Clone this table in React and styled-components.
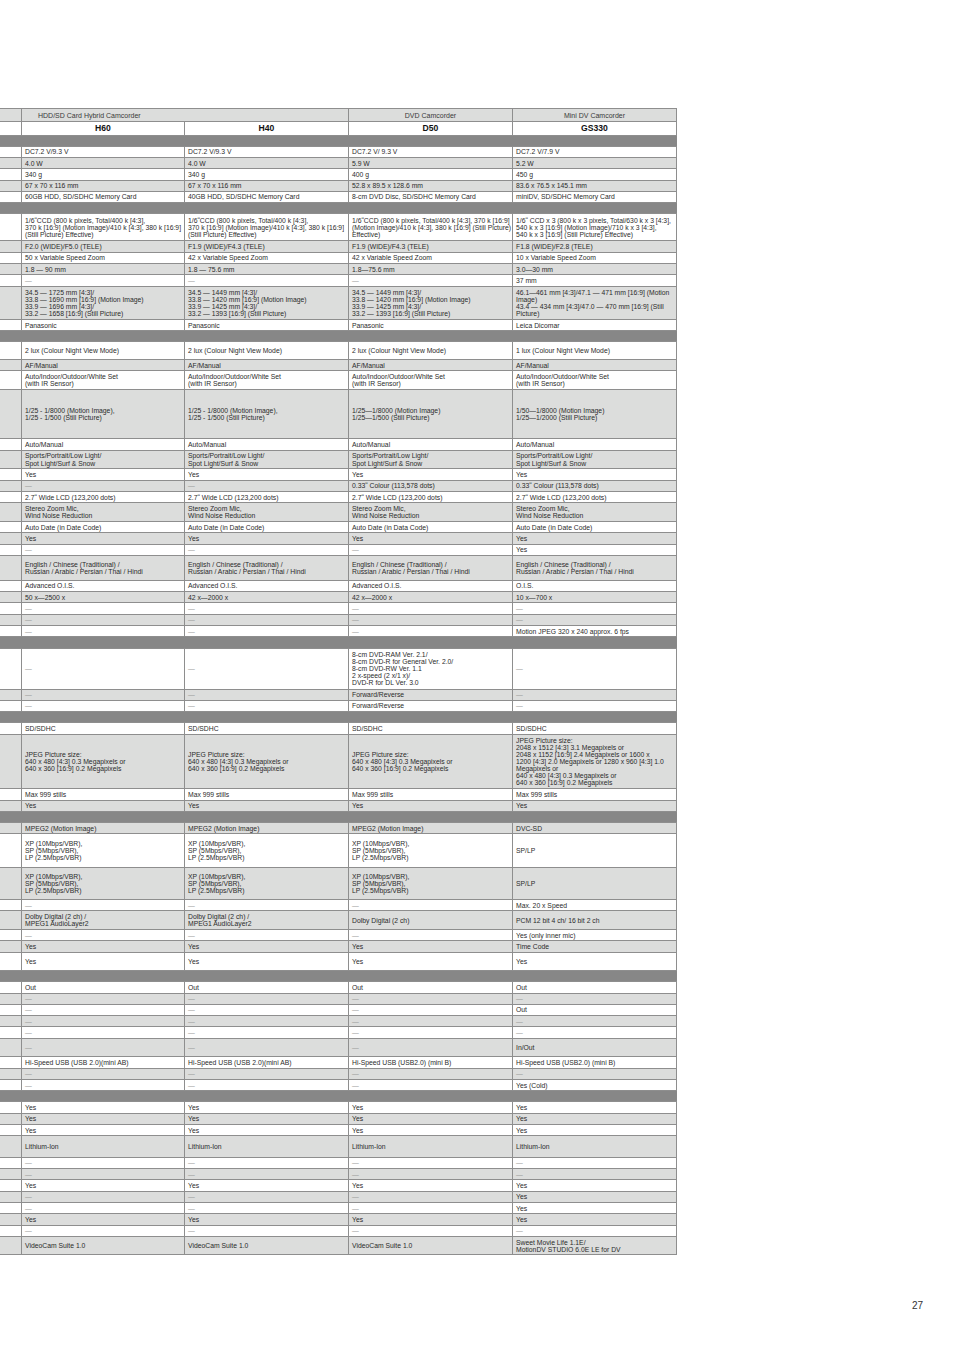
import React from "react";
import styled, { createGlobalStyle } from "styled-components";

const Global = createGlobalStyle`
  html, body { margin: 0; padding: 0; background: #fff; }
  body { font-family: "Liberation Sans", Arial, sans-serif; }
`;

const LINE = "#8e8e8e";
const GREY = "#dcdddc";

const Page = styled.div`
  width: 954px;
  min-height: 1350px;
  box-sizing: border-box;
  padding-top: 108px;
  display: flex;
  flex-direction: column;
`;

const Table = styled.div`
  width: 677px;
  border-top: 1px solid ${LINE};
  display: flex;
  flex-direction: column;
`;

const Row = styled.div`
  display: grid;
  grid-template-columns: 22px 163px 164px 164px 164px;
  height: ${(p) => p.$h}px;
  box-sizing: border-box;
  background: ${(p) => (p.$grey ? GREY : "#fff")};
  border-bottom: 1px solid ${LINE};
`;

const LabelCell = styled.div`
  border-right: 1px solid ${LINE};
  box-sizing: border-box;
`;

const Cell = styled.div`
  display: flex;
  align-items: center;
  box-sizing: border-box;
  padding: 0 2px 0 3px;
  border-right: 1px solid ${LINE};
  white-space: nowrap;
  font-size: 6.8px;
  line-height: 7.1px;
  color: #2b2b2b;
`;

const Dash = styled.span`
  color: #9a9a9a;
`;

const CategoryCell = styled.div`
  grid-column: span ${(p) => p.$span || 1};
  display: flex;
  align-items: center;
  justify-content: ${(p) => (p.$left ? "flex-start" : "center")};
  padding-left: ${(p) => (p.$left ? "16px" : "0")};
  border-right: 1px solid ${LINE};
  box-sizing: border-box;
  font-size: 7px;
  color: #3a3a3a;
  white-space: nowrap;
`;

const ModelCell = styled.div`
  display: flex;
  align-items: center;
  justify-content: center;
  border-right: 1px solid ${LINE};
  box-sizing: border-box;
  font-size: 8.6px;
  font-weight: 700;
  color: #111;
`;

const SectionBar = styled.div`
  height: ${(p) => p.$h}px;
  background: #878787;
  border-bottom: 1px solid ${LINE};
  box-sizing: border-box;
`;

const Footer = styled.div`
  display: flex;
  justify-content: flex-end;
  padding-right: 31px;
  margin-top: 45px;
`;

const PageNum = styled.span`
  font-size: 10px;
  color: #333;
`;

const S = 11.3;
const r = (c, h = S) => ({ h, c: Array.isArray(c) ? c : [c, c, c, c] });
const D = "-";

const sections = [
  {
    grey: false,
    rows: [
      r(["DC7.2 V/9.3 V", "DC7.2 V/9.3 V", "DC7.2 V/ 9.3 V", "DC7.2 V/7.9 V"]),
      r(["4.0 W", "4.0 W", "5.9 W", "5.2 W"]),
      r(["340 g", "340 g", "400 g", "450 g"]),
      r(["67 x 70 x 116 mm", "67 x 70 x 116 mm", "52.8 x 89.5 x 128.6 mm", "83.6 x 76.5 x 145.1 mm"]),
      r(["60GB HDD, SD/SDHC Memory Card", "40GB HDD, SD/SDHC Memory Card", "8-cm DVD Disc, SD/SDHC Memory Card", "miniDV, SD/SDHC Memory Card"]),
    ],
  },
  {
    grey: false,
    rows: [
      r(
        [
          "1/6\u02BACCD (800 k pixels, Total/400 k [4:3],\n370 k [16:9] (Motion Image)/410 k [4:3], 380 k [16:9]\n(Still Picture) Effective)",
          "1/6\u02BACCD (800 k pixels, Total/400 k [4:3],\n370 k [16:9] (Motion Image)/410 k [4:3], 380 k [16:9]\n(Still Picture) Effective)",
          "1/6\u02BACCD (800 k pixels, Total/400 k [4:3], 370 k [16:9]\n(Motion Image)/410 k [4:3], 380 k [16:9] (Still Picture)\nEffective)",
          "1/6\u02BA CCD x 3 (800 k x 3 pixels, Total/630 k x 3 [4:3],\n540 k x 3 [16:9] (Motion Image)/710 k x 3 [4:3],\n540 k x 3 [16:9] (Still Picture) Effective)",
        ],
        27
      ),
      r(["F2.0 (WIDE)/F5.0 (TELE)", "F1.9 (WIDE)/F4.3 (TELE)", "F1.9 (WIDE)/F4.3 (TELE)", "F1.8 (WIDE)/F2.8 (TELE)"]),
      r(["50 x Variable Speed Zoom", "42 x Variable Speed Zoom", "42 x Variable Speed Zoom", "10 x Variable Speed Zoom"]),
      r(["1.8 \u2014 90 mm", "1.8 \u2014 75.6 mm", "1.8\u201475.6 mm", "3.0\u201430 mm"]),
      r([D, D, D, "37 mm"]),
      r(
        [
          "34.5 \u2014 1725 mm [4:3]/\n33.8 \u2014 1690 mm [16:9] (Motion Image)\n33.9 \u2014 1696 mm [4:3]/\n33.2 \u2014 1658 [16:9] (Still Picture)",
          "34.5 \u2014 1449 mm [4:3]/\n33.8 \u2014 1420 mm [16:9] (Motion Image)\n33.9 \u2014 1425 mm [4:3]/\n33.2 \u2014 1393 [16:9] (Still Picture)",
          "34.5 \u2014 1449 mm [4:3]/\n33.8 \u2014 1420 mm [16:9] (Motion Image)\n33.9 \u2014 1425 mm [4:3]/\n33.2 \u2014 1393 [16:9] (Still Picture)",
          "46.1\u2014461 mm [4:3]/47.1 \u2014 471 mm [16:9] (Motion\nImage)\n43.4 \u2014 434 mm [4:3]/47.0 \u2014 470 mm [16:9] (Still\nPicture)",
        ],
        33.4
      ),
      r(["Panasonic", "Panasonic", "Panasonic", "Leica Dicomar"]),
    ],
  },
  {
    grey: false,
    rows: [
      r(["2 lux (Colour Night View Mode)", "2 lux (Colour Night View Mode)", "2 lux (Colour Night View Mode)", "1 lux (Colour Night View Mode)"], 17.5),
      r("AF/Manual"),
      r("Auto/Indoor/Outdoor/White Set\n(with IR Sensor)", 18.7),
      r(
        [
          "1/25 - 1/8000 (Motion Image),\n1/25 - 1/500 (Still Picture)",
          "1/25 - 1/8000 (Motion Image),\n1/25 - 1/500 (Still Picture)",
          "1/25\u20141/8000 (Motion Image)\n1/25\u20141/500 (Still Picture)",
          "1/50\u20141/8000 (Motion Image)\n1/25\u20141/2000 (Still Picture)",
        ],
        49.5
      ),
      r("Auto/Manual"),
      r("Sports/Portrait/Low Light/\nSpot Light/Surf & Snow", 18.7),
      r("Yes"),
      r([D, D, "0.33\u02BA Colour (113,578 dots)", "0.33\u02BA Colour (113,578 dots)"]),
      r("2.7\u02BA Wide LCD (123,200 dots)"),
      r("Stereo Zoom Mic,\nWind Noise Reduction", 18.7),
      r(["Auto Date (in Date Code)", "Auto Date (in Date Code)", "Auto Date (in Data Code)", "Auto Date (in Date Code)"]),
      r("Yes"),
      r([D, D, D, "Yes"]),
      r("English / Chinese (Traditional) /\nRussian / Arabic / Persian / Thai / Hindi", 25),
      r(["Advanced O.I.S.", "Advanced O.I.S.", "Advanced O.I.S.", "O.I.S."]),
      r(["50 x\u20142500 x", "42 x\u20142000 x", "42 x\u20142000 x", "10 x\u2014700 x"]),
      r(D),
      r(D),
      r([D, D, D, "Motion JPEG 320 x 240 approx. 6 fps"]),
    ],
  },
  {
    grey: false,
    rows: [
      r([D, D, "8-cm DVD-RAM Ver. 2.1/\n8-cm DVD-R for General Ver. 2.0/\n8-cm DVD-RW Ver. 1.1\n2 x-speed (2 x/1 x)/\nDVD-R for DL Ver. 3.0", D], 41),
      r([D, D, "Forward/Reverse", D]),
      r([D, D, "Forward/Reverse", D]),
    ],
  },
  {
    grey: false,
    rows: [
      r("SD/SDHC"),
      r(
        [
          "JPEG Picture size:\n640 x 480 [4:3] 0.3 Megapixels or\n640 x 360 [16:9] 0.2 Megapixels",
          "JPEG Picture size:\n640 x 480 [4:3] 0.3 Megapixels or\n640 x 360 [16:9] 0.2 Megapixels",
          "JPEG Picture size:\n640 x 480 [4:3] 0.3 Megapixels or\n640 x 360 [16:9] 0.2 Megapixels",
          "JPEG Picture size:\n2048 x 1512 [4:3] 3.1 Megapixels or\n2048 x 1152 [16:9] 2.4 Megapixels or 1600 x\n1200 [4:3] 2.0 Megapixels  or 1280 x 960 [4:3] 1.0\nMegapixels or\n640 x 480 [4:3] 0.3 Megapixels or\n640 x 360 [16:9] 0.2 Megapixels",
        ],
        54.7
      ),
      r("Max 999 stills"),
      r("Yes"),
    ],
  },
  {
    grey: true,
    rows: [
      r(["MPEG2 (Motion Image)", "MPEG2 (Motion Image)", "MPEG2 (Motion Image)", "DVC-SD"]),
      r(["XP (10Mbps/VBR),\nSP (5Mbps/VBR),\nLP (2.5Mbps/VBR)", "XP (10Mbps/VBR),\nSP (5Mbps/VBR),\nLP (2.5Mbps/VBR)", "XP (10Mbps/VBR),\nSP (5Mbps/VBR),\nLP (2.5Mbps/VBR)", "SP/LP"], 33.2),
      r(["XP (10Mbps/VBR),\nSP (5Mbps/VBR),\nLP (2.5Mbps/VBR)", "XP (10Mbps/VBR),\nSP (5Mbps/VBR),\nLP (2.5Mbps/VBR)", "XP (10Mbps/VBR),\nSP (5Mbps/VBR),\nLP (2.5Mbps/VBR)", "SP/LP"], 32.5),
      r([D, D, D, "Max. 20 x Speed"]),
      r(["Dolby Digital (2 ch) /\nMPEG1 AudioLayer2", "Dolby Digital (2 ch) /\nMPEG1 AudioLayer2", "Dolby Digital (2 ch)", "PCM 12 bit 4 ch/ 16 bit 2 ch"], 18.7),
      r([D, D, D, "Yes (only inner mic)"]),
      r(["Yes", "Yes", "Yes", "Time Code"]),
      r("Yes", 18.4),
    ],
  },
  {
    grey: false,
    rows: [
      r("Out"),
      r(D),
      r([D, D, D, "Out"]),
      r(D),
      r(D),
      r([D, D, D, "In/Out"], 18.7),
      r(["Hi-Speed USB (USB 2.0)(mini AB)", "Hi-Speed USB (USB 2.0)(mini AB)", "Hi-Speed USB (USB2.0) (mini B)", "Hi-Speed USB (USB2.0) (mini B)"]),
      r(D),
      r([D, D, D, "Yes (Cold)"]),
    ],
  },
  {
    grey: false,
    rows: [
      r("Yes"),
      r("Yes"),
      r("Yes"),
      r("Lithium-Ion", 21.5),
      r(D),
      r(D),
      r("Yes"),
      r([D, D, D, "Yes"]),
      r([D, D, D, "Yes"]),
      r("Yes"),
      r(D),
      r(["VideoCam Suite 1.0", "VideoCam Suite 1.0", "VideoCam Suite 1.0", "Sweet Movie Life 1.1E/\nMotionDV STUDIO 6.0E LE for DV"], 18.4),
    ],
  },
];

function CellText({ text }) {
  if (text === D) return <Dash>{"\u2014"}</Dash>;
  const lines = text.split("\n");
  return (
    <span>
      {lines.map((l, i) => (
        <React.Fragment key={i}>
          {i > 0 && <br />}
          {l}
        </React.Fragment>
      ))}
    </span>
  );
}

export default function App() {
  return (
    <>
      <Global />
      <Page>
        <Table>
          <Row $h={13} $grey>
            <LabelCell />
            <CategoryCell $span={2} $left>HDD/SD Card Hybrid Camcorder</CategoryCell>
            <CategoryCell>DVD Camcorder</CategoryCell>
            <CategoryCell>Mini DV Camcorder</CategoryCell>
          </Row>
          <Row $h={13.5}>
            <LabelCell />
            <ModelCell>H60</ModelCell>
            <ModelCell>H40</ModelCell>
            <ModelCell>D50</ModelCell>
            <ModelCell>GS330</ModelCell>
          </Row>
          {sections.map((sec, si) => (
            <React.Fragment key={si}>
              <SectionBar $h={11.2} />
              {sec.rows.map((row, ri) => (
                <Row key={ri} $h={row.h} $grey={(ri % 2 === 1) !== sec.grey}>
                  <LabelCell />
                  {row.c.map((t, ci) => (
                    <Cell key={ci}>
                      <CellText text={t} />
                    </Cell>
                  ))}
                </Row>
              ))}
            </React.Fragment>
          ))}
        </Table>
        <Footer>
          <PageNum>27</PageNum>
        </Footer>
      </Page>
    </>
  );
}
